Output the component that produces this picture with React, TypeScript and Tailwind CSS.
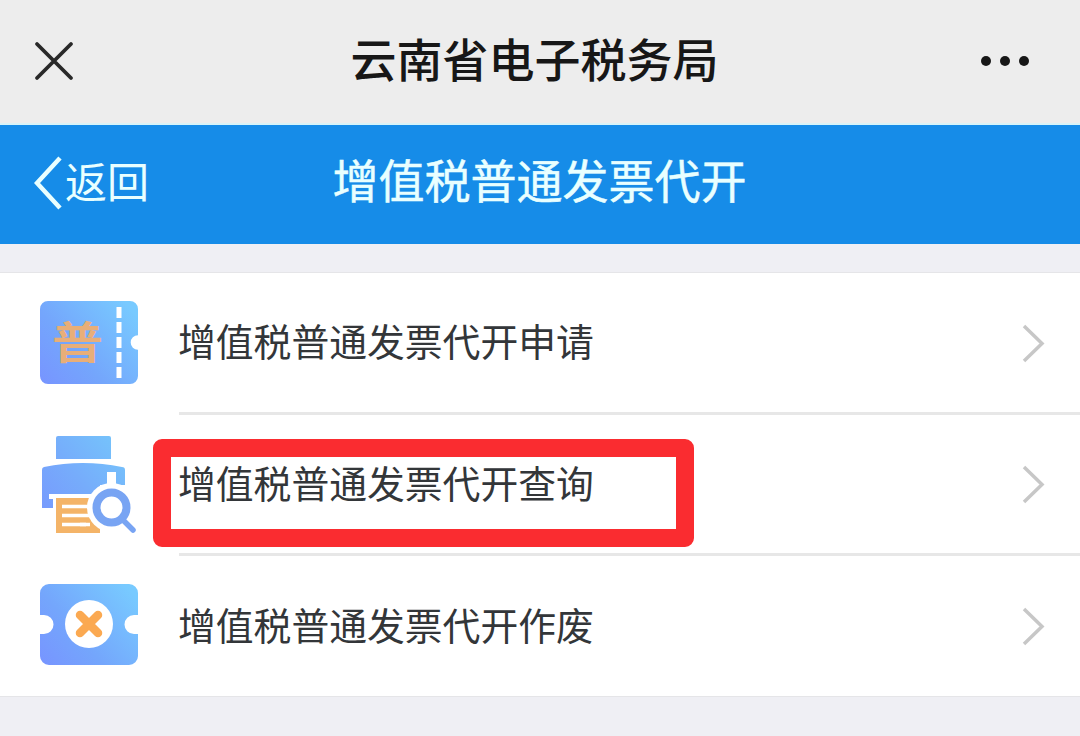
import type { ReactNode } from "react";

const TicketIcon = () => (
  <svg width="98" height="84" viewBox="0 0 98 84" fill="none">
    <defs>
      <linearGradient id="ticket" x1="4" y1="84" x2="92" y2="8" gradientUnits="userSpaceOnUse">
        <stop stopColor="#7795ff" />
        <stop offset=".4" stopColor="#74a6fc" />
        <stop offset="1" stopColor="#78caff" />
      </linearGradient>
    </defs>
    <path
      d="M8 0H90a8 8 0 0 1 8 8V34.2a7.3 7.3 0 0 0 0 14.6V75a8 8 0 0 1-8 8H8a8 8 0 0 1-8-8V8a8 8 0 0 1 8-8Z"
      fill="url(#ticket)"
    />
    <path d="M79 6v71" stroke="#fff" strokeWidth="5" strokeDasharray="11 4" />
    <text
      transform="translate(37.5 57.5) scale(1 .88)"
      textAnchor="middle"
      fontSize="51"
      fontWeight="700"
      fill="#e8ae78"
      fontFamily="'Noto Sans CJK SC', sans-serif"
    >
      普
    </text>
  </svg>
);

const PrinterSearchIcon = () => (
  <svg width="98" height="100" viewBox="0 0 98 100" fill="none">
    <defs>
      <linearGradient id="printer" x1="4" y1="74" x2="82" y2="8" gradientUnits="userSpaceOnUse">
        <stop stopColor="#779bfd" />
        <stop offset=".45" stopColor="#76acfb" />
        <stop offset="1" stopColor="#75c4fb" />
      </linearGradient>
    </defs>
    <path d="M18 1H69a2 2 0 0 1 2 2V24H16V3a2 2 0 0 1 2-2Z" fill="url(#printer)" />
    <path
      d="M4 32Q43 24 82 32a3 3 0 0 1 3 3V50H60V73H2V35a3 3 0 0 1 2-3Z"
      fill="url(#printer)"
    />
    <path d="M13 59H60V74H13Z" fill="#fff" />
    <path d="M9 59H60V64H9Z" fill="#fff" />
    <path d="M16 63H60V98H16Z" fill="#f4b468" />
    <path d="M22 71.5H50M22 80.5H50M22 89.5H50" stroke="#fff" strokeWidth="3.5" />
    <path d="M67 37h9v14h-9Z" fill="#fff" />
    <circle cx="71.5" cy="72.5" r="24.5" fill="#fff" />
    <path d="M50 84 56 98H46V84Z" fill="#f4b468" />
    <path d="M40 89.5H50" stroke="#fff" strokeWidth="3.5" />
    <circle cx="71.5" cy="72.5" r="15" stroke="#78a4f3" strokeWidth="8" />
    <path d="m82 84 11 11" stroke="#78a4f3" strokeWidth="5.5" strokeLinecap="round" />
  </svg>
);

const VoidIcon = () => (
  <svg width="98" height="82" viewBox="0 0 98 82" fill="none">
    <defs>
      <linearGradient id="void" x1="4" y1="82" x2="92" y2="8" gradientUnits="userSpaceOnUse">
        <stop stopColor="#7795ff" />
        <stop offset=".4" stopColor="#74a6fc" />
        <stop offset="1" stopColor="#78caff" />
      </linearGradient>
    </defs>
    <path
      d="M9 0H89a9 9 0 0 1 9 9V31H94a9.5 9.5 0 0 0 0 19h4V72a9 9 0 0 1-9 9H9a9 9 0 0 1-9-9V50H4a9.5 9.5 0 0 0 0-19H0V9a9 9 0 0 1 9-9Z"
      fill="url(#void)"
    />
    <circle cx="49" cy="40" r="24" fill="#fff" />
    <path d="m40 31 18 18M58 31 40 49" stroke="#fba951" strokeWidth="8.5" strokeLinecap="round" />
  </svg>
);

type MenuItem = {
  label: string;
  icon: ReactNode;
  height: string;
  highlighted?: boolean;
};

const items: MenuItem[] = [
  { label: "增值税普通发票代开申请", icon: <TicketIcon />, height: "h-[142px]" },
  { label: "增值税普通发票代开查询", icon: <PrinterSearchIcon />, height: "h-[141px]", highlighted: true },
  { label: "增值税普通发票代开作废", icon: <VoidIcon />, height: "h-[140px]" },
];

const App = () => {
  return (
    <div className="h-[736px] w-[1080px] overflow-hidden bg-[#efeff4] font-['Noto_Sans_CJK_SC',sans-serif]">
      {/* Browser title bar */}
      <header className="grid h-[125px] grid-cols-[120px_1fr_120px] items-center border-b-2 border-[#d9f3f8] bg-[#ededed] pb-0.5">
        <button aria-label="关闭" className="pl-[34px]">
          <svg width="40" height="40" viewBox="0 0 40 40" stroke="#292929" strokeWidth="3.8" strokeLinecap="round">
            <path d="m3 3 34 34M37 3 3 37" />
          </svg>
        </button>
        <h1 className="pr-[11px] pb-[7px] text-center text-[46px] leading-none font-medium text-[#171717]">
          云南省电子税务局
        </h1>
        <button aria-label="更多" className="flex gap-[9px] pl-[21px]">
          <span className="size-2.5 rounded-full bg-[#171717]" />
          <span className="size-2.5 rounded-full bg-[#171717]" />
          <span className="size-2.5 rounded-full bg-[#171717]" />
        </button>
      </header>

      {/* Page navigation */}
      <nav className="grid h-[119px] grid-cols-[200px_1fr_200px] items-center bg-[#168ce8] pb-1 text-[#e9ffff]">
        <button className="flex items-center pl-[34px]">
          <svg width="31" height="54" viewBox="0 0 31 54" fill="none" stroke="currentColor" strokeWidth="4.5">
            <path d="M26 2 3 27l23 25" />
          </svg>
          <span className="pb-1.5 text-[42px] leading-none">返回</span>
        </button>
        <h2 className="pr-px pb-2.5 text-center text-[46px] leading-none [-webkit-text-stroke:0.5px]">
          增值税普通发票代开
        </h2>
      </nav>

      <ul className="mt-7 border-t border-b border-[#e5e5e8] bg-white">
        {items.map((item, index) => (
          <li key={item.label} className={`relative flex items-center pl-10 ${item.height}`}>
            <div className="flex w-[139px] shrink-0 items-center pb-0.5">{item.icon}</div>
            <div
              className={`flex h-full flex-1 items-center justify-between pr-[34px] ${
                index < items.length - 1 ? "border-b-3 border-[#e7e7e7]" : ""
              }`}
            >
              <span className="-ml-px pb-[5px] text-[37.8px] leading-none text-[#333639]">{item.label}</span>
              <svg width="24" height="40" viewBox="0 0 24 40" fill="none" stroke="#c7c7c7" strokeWidth="3.5">
                <path d="m2 3 18 17.5L2 38" />
              </svg>
            </div>
            {/* Marker frame around the entry to tap */}
            {item.highlighted && (
              <div className="absolute top-6 left-[153px] h-[108px] w-[541px] rounded-[9px] border-18 border-[#fa2c30]" />
            )}
          </li>
        ))}
      </ul>
    </div>
  );
};

export default App;
